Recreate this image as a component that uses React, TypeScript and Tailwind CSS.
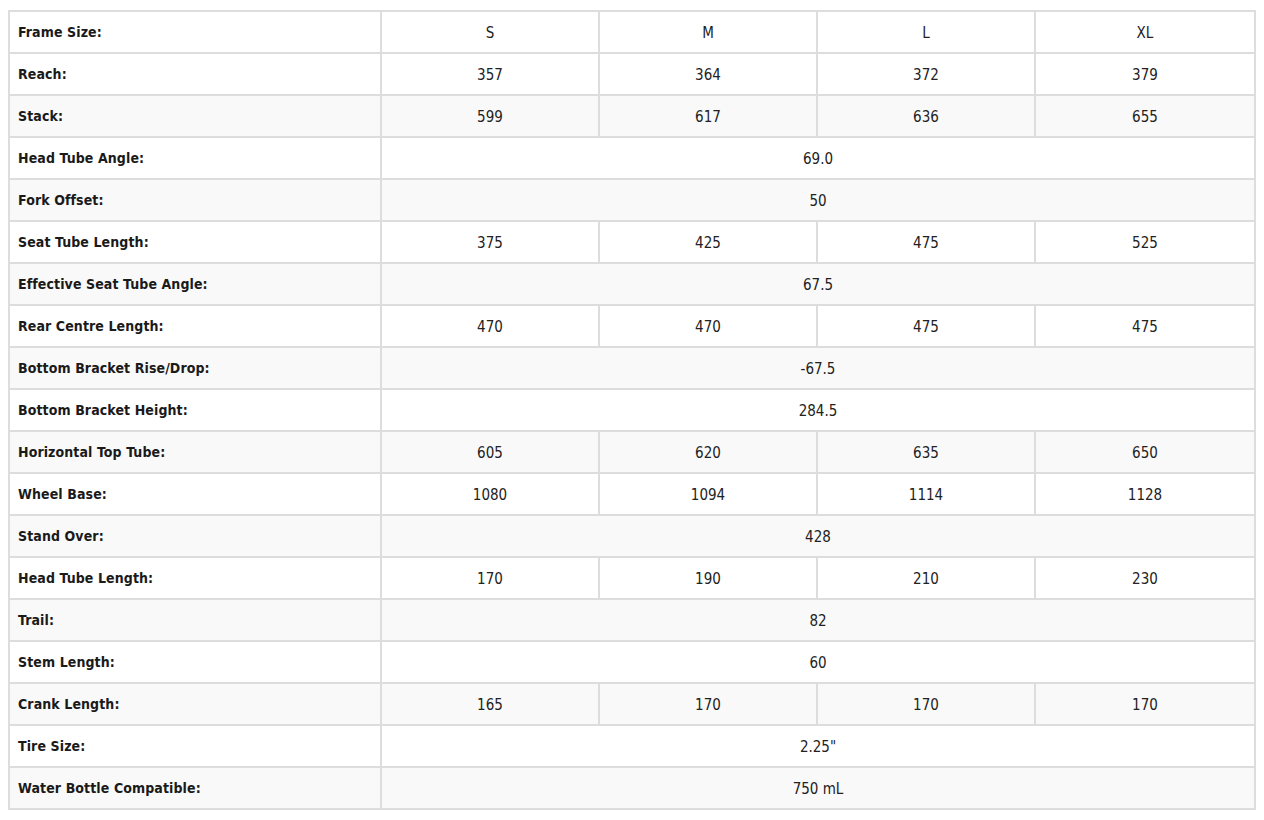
import React from "react";

type Row = { label: string; values: string[] };

const ROWS: Row[] = [
  { label: "Frame Size:", values: ["S", "M", "L", "XL"] },
  { label: "Reach:", values: ["357", "364", "372", "379"] },
  { label: "Stack:", values: ["599", "617", "636", "655"] },
  { label: "Head Tube Angle:", values: ["69.0"] },
  { label: "Fork Offset:", values: ["50"] },
  { label: "Seat Tube Length:", values: ["375", "425", "475", "525"] },
  { label: "Effective Seat Tube Angle:", values: ["67.5"] },
  { label: "Rear Centre Length:", values: ["470", "470", "475", "475"] },
  { label: "Bottom Bracket Rise/Drop:", values: ["-67.5"] },
  { label: "Bottom Bracket Height:", values: ["284.5"] },
  { label: "Horizontal Top Tube:", values: ["605", "620", "635", "650"] },
  { label: "Wheel Base:", values: ["1080", "1094", "1114", "1128"] },
  { label: "Stand Over:", values: ["428"] },
  { label: "Head Tube Length:", values: ["170", "190", "210", "230"] },
  { label: "Trail:", values: ["82"] },
  { label: "Stem Length:", values: ["60"] },
  { label: "Crank Length:", values: ["165", "170", "170", "170"] },
  { label: "Tire Size:", values: ['2.25"'] },
  { label: "Water Bottle Compatible:", values: ["750 mL"] },
];

export default function App() {
  return (
    <div className="min-h-screen bg-white pt-[10px] pl-[8px]">
      <div
        className="grid w-[1248px] grid-cols-[370px_216px_216px_216px_1fr] gap-[2px] bg-[#dddddd] p-[2px] text-[#222]"
        style={{ fontFamily: '"DejaVu Sans Condensed", "Liberation Sans", sans-serif' }}
      >
        {ROWS.map((row, i) => {
          const bg = i > 0 && i % 2 === 0 ? "bg-[#f9f9f9]" : "bg-white";
          return (
            <React.Fragment key={row.label}>
              <div className={`${bg} flex h-10 items-center pl-2 pt-[1px] text-[14px] tracking-[0.1px] font-bold text-[#1a1a1a]`}>
                {row.label}
              </div>
              {row.values.length === 1 ? (
                <div className={`${bg} col-span-4 flex h-10 items-center justify-center pt-[2px] text-[15px]`}>
                  {row.values[0]}
                </div>
              ) : (
                row.values.map((v, j) => (
                  <div key={j} className={`${bg} flex h-10 items-center justify-center pt-[2px] text-[15px]`}>
                    {v}
                  </div>
                ))
              )}
            </React.Fragment>
          );
        })}
      </div>
    </div>
  );
}
